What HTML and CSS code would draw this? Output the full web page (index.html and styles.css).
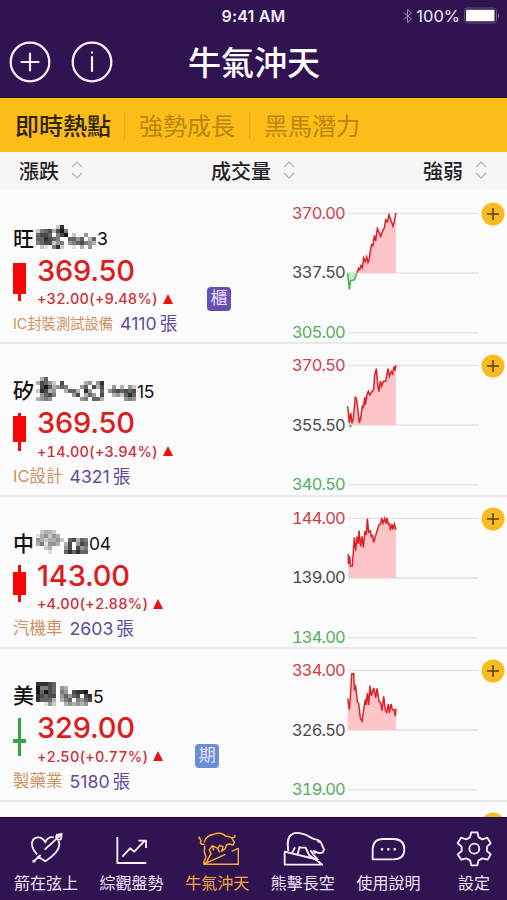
FILE: index.html
```
<!DOCTYPE html>
<html lang="zh-Hant">
<head>
  <meta charset="UTF-8">
  <meta name="viewport" content="width=device-width, initial-scale=1">
  <title>牛氣沖天</title>
  <link rel="stylesheet" href="styles.css">
</head>
<body>
  <div class="app">
    <header class="header">
      <div class="statusbar">
        <span class="time">9:41 AM</span>
        <div class="status-right">
          <svg class="bluetooth" viewBox="0 0 10 16"><path d="M1 4.5 9 11 5 14.5v-13L9 5 1 11.5"/></svg>
          <span class="percent">100%</span>
          <svg class="battery" viewBox="0 0 36 17">
            <rect class="battery-case" x=".5" y="1" width="32" height="15" rx="3"/>
            <rect x="2" y="2.7" width="28.5" height="11.5" rx="1"/>
            <path class="battery-tip" d="M34 6q2 2.5 0 5z"/>
          </svg>
        </div>
      </div>
      <div class="navbar">
        <div class="nav-buttons">
          <svg viewBox="0 0 42 42"><circle cx="21" cy="21" r="19.3"/><path d="M12.5 21h17M21 12.5v17"/></svg>
          <svg viewBox="0 0 42 42"><circle cx="21" cy="21" r="19.3"/><path d="M21 16v14M21 11.3v.4"/></svg>
        </div>
        <h1>牛氣沖天</h1>
      </div>
    </header>

    <nav class="tabs">
      <span class="tab active">即時熱點</span>
      <span class="tab">強勢成長</span>
      <span class="tab">黑馬潛力</span>
    </nav>

    <div class="sortbar">
      <div class="sort">漲跌<svg viewBox="0 0 12 20"><path d="m1 7 5-5 5 5M1 13l5 5 5-5"/></svg></div>
      <div class="sort">成交量<svg viewBox="0 0 12 20"><path d="m1 7 5-5 5 5M1 13l5 5 5-5"/></svg></div>
      <div class="sort">強弱<svg viewBox="0 0 12 20"><path d="m1 7 5-5 5 5M1 13l5 5 5-5"/></svg></div>
    </div>

    <main class="list" id="list"></main>

    <footer class="tabbar">
      <div class="item">
        <svg viewBox="72 54 132 120">
          <path d="M98 154l24-22M104 154v-5h-6M112 136l24 15c20-13 42-32 42-51 0-5-1-9-4-12M161 79c-12-2-21 5-25 15-5-10-13-16-24-15-14 2-19 15-15 28 3 10 8 17 14 23M134 116l50-46M168 72l17-3-2 17M168 83l2-11M172 85l11 1"/>
        </svg>
        <span>箭在弦上</span>
      </div>
      <div class="item">
        <svg viewBox="330 54 132 120">
          <path d="M352 78v78h87M367 137l23-25 13 10 32-34M415 89h23v22"/>
        </svg>
        <span>綜觀盤勢</span>
      </div>
      <div class="item active">
        <svg viewBox="588 54 132 120">
          <path d="M616 94c4-16 16-22 28-24 12-6 28-4 36 6 8-2 14 2 18 5 7 0 10-3 10-9M699 82l7 12-4 8-10-3-9 2-4 11-11 9 4-14-10-4-6 9 6 12M656 112l-16-8-9 12 5 12-8 14-6 14h-8l7-18-5-15 1-19M616 99c-9 3-14-3-10-9 2-4-6-5-6-12M598 82l5-5M640 104l4 14M613 160h105v-48l-20 9M613 160l66-30"/>
        </svg>
        <span>牛氣沖天</span>
      </div>
      <div class="item">
        <svg viewBox="84 54 132 120">
          <path d="M106 120c-3-20-5-42 12-51 10-6 28-2 39 2 12 5 20 13 30 14 6 0 10 0 17 10l9 20-4 10-13 1-12-6M95 122v39h113l-22-17zM118 124l8-15M140 106l-6 24M140 110h18l10 22 22 16M172 118l10 14 14 16M180 118l8 10M199 94l-5-5"/>
        </svg>
        <span>熊擊長空</span>
      </div>
      <div class="item">
        <svg viewBox="342 54 132 120">
          <path d="M362 145v-30q1-31 32-31h31q32 1 32 31t-32 30z"/>
          <path class="dots" d="M390 115h.1M409 115h.1M428 115h.1"/>
        </svg>
        <span>使用說明</span>
      </div>
      <div class="item">
        <svg viewBox="598 54 132 120">
          <path d="M656 64h18l4 15 11 6 15-5 10 17-11 10v13l11 10-9 16-16-4-11 6-4 15h-18l-4-15-11-6-15 4-11-16 12-10v-13l-12-10 10-17 16 5 11-6z"/>
          <circle cx="665" cy="113" r="15"/>
        </svg>
        <span>設定</span>
      </div>
    </footer>
  </div>

  <script>
    // candle: [wick top, body top, body bottom, wick bottom]
    // mask: darkness 0-9 of each 4px cell
    const stocks = [
      {
        name: '旺', code: '3', price: '369.50', change: '+32.00(+9.48%)', sector: 'IC封裝測試設備', volume: '4110',
        badge: '櫃', badgeClass: 'otc', candle: [3, 3, 34, 41], scale: ['370.00', '337.50', '305.00'],
        mask: ['000002800000000', '256737950000000', '677605790200400', '668765006646036', '567724504567543', '021058200103040'],
        up: '30,245 35,232 38,236 42,224 46,231 50,201 55,212 59,198 63,214 67,204 70,180 74,161 78,164 82,133 86,150 91,113 98,128 101,136 108,118 112,110 116,87 121,93 126,72 131,86 138,106 142,91 147,66',
        down: '2,247 4,266 7,296 11,269 22,267 29,247'
      },
      {
        name: '矽', code: '15', price: '369.50', change: '+14.00(+3.94%)', sector: 'IC設計', volume: '4321',
        candle: [1, 4, 30, 39], scale: ['370.50', '355.50', '340.50'],
        mask: ['0360000000000000000000000', '3764207000003404800000000', '0796346500046073700403042', '2873400366308400604676767', '0467500004703640700342686', '3454000000045066300000454'],
        up: '2,190 7,239 11,210 15,241 19,225 25,161 29,171 37,240 42,220 46,187 49,196 53,163 55,186 60,154 64,145 68,156 72,150 80,139 83,96 88,77 92,124 96,146 100,114 104,129 109,115 116,115 123,77 127,101 133,85 137,93 141,70 144,83 147,67',
        down: '8,247 10,251 13,247'
      },
      {
        name: '中', code: '04', price: '143.00', change: '+4.00(+2.88%)', sector: '汽機車', volume: '2603',
        candle: [0, 7, 30, 37], scale: ['144.00', '139.00', '134.00'],
        mask: ['0233200000000', '1342430000000', '4323342067365', '3514430370476', '0023000470745', '0001000686866'],
        up: '4,174 4,204 8,181 10,210 16,210 18,180 22,124 26,165 30,122 34,144 36,104 41,151 45,121 49,154 54,105 58,117 61,68 65,109 70,105 73,122 77,119 80,139 85,122 91,102 96,87 101,82 104,66 108,82 113,67 117,83 120,66 124,85 128,84 130,103 135,85 138,101 142,84 147,101',
        down: ''
      },
      {
        name: '美', code: '5', price: '329.00', change: '+2.50(+0.77%)', sector: '製藥業', volume: '5180',
        badge: '期', badgeClass: 'fut', candle: [1, 22, 26, 39], scale: ['334.00', '326.50', '319.00'],
        mask: ['88876000000000', '95576043000000', '96976054078890', '87677046467078', '86663035605467', '00142003434340'],
        up: '2,151 7,185 11,134 14,78 20,77 22,123 26,115 31,161 35,167 40,211 45,220 50,184 55,154 57,171 61,135 65,171 69,113 73,144 80,120 86,150 90,121 96,160 101,165 105,188 110,145 115,187 119,193 124,168 127,195 132,168 136,185 141,185 145,205 147,182',
        down: ''
      }
    ];

    function mosaic(rows) {
      const cols = rows[0].length;
      let cells = '';
      rows.forEach((row, y) => [...row].forEach((v, x) => {
        if (+v) cells += `<rect x="${x * 4}" y="${y * 4}" width="4" height="4" fill-opacity="${v / 10}"/>`;
      }));
      return `<svg class="mosaic" width="${cols * 4}" height="24">${cells}</svg>`;
    }

    function candle([top, bodyTop, bodyBottom, bottom]) {
      const small = bodyBottom - bodyTop < 6;
      return `<svg class="candle ${small ? 'green' : ''}" viewBox="0 0 13 42">
        <rect x="5" y="${top}" width="3" height="${bottom - top}"/>
        <rect y="${bodyTop}" width="13" height="${bodyBottom - bodyTop}"/>
      </svg>`;
    }

    function chart(s) {
      const lastX = 147;
      const firstX = s.up.split(',')[0];
      return `<svg class="chart" viewBox="0 0 399 458">
        <path class="grid" d="M2 67h392M2 246h392M2 426h392"/>
        <polygon class="up-area" points="${firstX},246 ${s.up} ${lastX},246"/>
        <polyline class="up-line" points="${s.up}"/>
        ${s.down ? `<polygon class="down-area" points="${s.down}"/><polyline class="down-line" points="${s.down}"/>` : ''}
      </svg>`;
    }

    const plus = '<svg class="add" viewBox="0 0 24 24"><circle cx="12" cy="12" r="11.5"/><path d="M6 12h12M12 6v12"/></svg>';

    document.getElementById('list').innerHTML = stocks.map(s => `
      <section class="stock">
        <div class="info">
          <div class="name">${s.name}${mosaic(s.mask)}<span>${s.code}</span></div>
          <div class="quote">
            ${candle(s.candle)}
            <div>
              <div class="price">${s.price}</div>
              <div class="change">${s.change}<i class="triangle"></i>${s.badge ? `<b class="badge ${s.badgeClass}">${s.badge}</b>` : ''}</div>
            </div>
          </div>
          <div class="meta"><span class="sector ${s.sector.length > 6 ? 'long' : ''}">${s.sector}</span><span class="volume">${s.volume}<em>張</em></span></div>
        </div>
        <div class="scale"><span>${s.scale[0]}</span><span>${s.scale[1]}</span><span>${s.scale[2]}</span></div>
        ${chart(s)}
        ${plus}
      </section>`).join('') + `<section class="stock"><div class="info"></div><div class="scale"></div><div class="chart"></div>${plus}</section>`;
  </script>
</body>
</html>
```
FILE: styles.css
```
* {
  margin: 0;
  padding: 0;
  box-sizing: border-box;
}

body {
  background: #fbfbfb;
  font-family: Inter, "Noto Sans CJK TC", sans-serif;
  overflow: hidden;
}

.app {
  height: 900px;
  display: flex;
  flex-direction: column;
}

.header {
  height: 98px;
  flex: none;
  background: #301451;
  border-bottom: 1px solid #220b30;
  color: #fff;
}

.statusbar {
  height: 31px;
  display: grid;
  grid-template-columns: 1fr auto 1fr;
  align-items: center;
  color: #f4eafa;
}

.time {
  grid-column: 2;
  font-size: 16px;
  font-weight: 600;
  letter-spacing: 0.2px;
}

.status-right {
  display: flex;
  align-items: center;
  justify-content: flex-end;
  padding-right: 7px;
}

.bluetooth {
  width: 11px;
  height: 16px;
  margin-right: 3px;
  fill: none;
  stroke: #a18bb9;
}

.percent {
  font-size: 16.5px;
  margin-right: 4px;
}

.battery {
  width: 36px;
  height: 17px;
  fill: #fff;
}

.battery-case {
  fill: none;
  stroke: #65507f;
}

.battery-tip {
  fill: #8a78a0;
}

.navbar {
  height: 62px;
  display: flex;
  align-items: center;
}

.nav-buttons {
  width: 188px;
  display: flex;
  gap: 20px;
  padding-left: 9px;
}

.nav-buttons svg {
  width: 42px;
  height: 42px;
  fill: none;
  stroke: #fbeeff;
  stroke-width: 2.2;
  stroke-linecap: round;
}

h1 {
  font-size: 33px;
  line-height: 40px;
  font-weight: 500;
  padding-top: 2px;
}

.tabs {
  height: 54px;
  flex: none;
  display: flex;
  align-items: center;
  background: #fbbd16;
}

.tab {
  padding: 2px 14px 0;
  font-size: 24px;
  line-height: 25px;
  color: #b98510;
}

.tab + .tab {
  border-left: 1px solid #dfa51b;
}

.tab.active {
  color: #30240c;
  font-weight: 500;
  padding: 2px 13px 0 15px;
}

.sortbar {
  height: 37px;
  flex: none;
  display: flex;
  justify-content: space-between;
  background: #f6f6f6;
  padding: 0 20px 1px 19px;
}

.sort {
  display: flex;
  align-items: center;
  gap: 12px;
  font-size: 20px;
  font-weight: 500;
  color: #222;
}

.sort svg {
  width: 12px;
  height: 20px;
  fill: none;
  stroke: #bdbdbd;
  stroke-width: 1.5;
}

.list {
  flex: 1;
  min-height: 0;
  overflow: hidden;
  padding-top: 2.5px;
}

.stock {
  height: 152.6px;
  display: flex;
  border-bottom: 2px solid #e9e9e9;
}

.info {
  width: 292px;
  padding: 31px 0 0 13px;
}

.name {
  height: 28px;
  display: flex;
  align-items: center;
  font-size: 21px;
  font-weight: 500;
  color: #111;
}

.name span {
  font-size: 17.5px;
  font-weight: 400;
  letter-spacing: -0.3px;
  padding: 4px 0 0 1px;
}

.mosaic {
  flex: none;
  margin-left: 2px;
}

.quote {
  height: 59px;
  display: flex;
  gap: 11px;
  padding-top: 1px;
}

.candle {
  width: 13px;
  height: 42px;
  margin-top: 8px;
  fill: #f90505;
}

.candle.green {
  fill: #36a345;
}

.price {
  height: 35px;
  font-size: 29px;
  line-height: 37px;
  font-weight: 500;
  letter-spacing: -0.2px;
  color: #dc1c20;
}

.change {
  height: 24px;
  display: flex;
  align-items: center;
  font-size: 14.5px;
  font-weight: 500;
  font-variant-numeric: tabular-nums;
  letter-spacing: 0.2px;
  color: #ca303a;
}

.triangle {
  border: 5.5px solid transparent;
  border-top: 0;
  border-bottom: 10px solid #ec1010;
  margin-left: 5px;
}

.badge {
  width: 24px;
  height: 24px;
  margin-left: 34px;
  border-radius: 4px;
  background: #6650b3;
  color: #e6ddff;
  font-size: 17px;
  font-weight: 400;
  line-height: 23px;
  letter-spacing: 0;
  text-align: center;
}

.badge.fut {
  margin-left: 32px;
  background: #6b8fd6;
}

.meta {
  height: 25px;
  display: flex;
  align-items: center;
  gap: 7px;
}

.sector {
  font-size: 16.5px;
  color: #ce915f;
}

.sector.long {
  font-size: 14.3px;
}

.volume {
  font-size: 17.7px;
  color: #604c98;
}

.volume em {
  font-style: normal;
  margin-left: 3px;
}

.scale {
  width: 55px;
  display: flex;
  flex-direction: column;
  gap: 39.5px;
  padding-top: 11px;
  font-size: 16.5px;
  line-height: 20px;
  font-variant-numeric: tabular-nums;
  letter-spacing: -0.85px;
  color: #48484c;
}

.scale span:first-child {
  color: #cf3e49;
}

.scale span:last-child {
  color: #58ac60;
}

.chart {
  width: 133px;
  height: 152.6px;
  flex: none;
  margin-top: -0.8px;
}

.grid {
  fill: none;
  stroke: #e0e2e0;
  stroke-width: 4;
}

.up-area {
  fill: #fdc5c7;
}

.up-line {
  fill: none;
  stroke: #dc2028;
  stroke-width: 4.5;
}

.down-area {
  fill: #c9edcb;
}

.down-line {
  fill: none;
  stroke: #46ad50;
  stroke-width: 4.5;
}

.add {
  width: 24px;
  height: 24px;
  flex: none;
  margin: 10px 0 0 1px;
  fill: #f8bb21;
}

.add path {
  stroke: #54400f;
  stroke-width: 1.5;
}

.tabbar {
  height: 83px;
  flex: none;
  display: flex;
  gap: 21.6px;
  padding: 11px 0 0 14px;
  background: #301451;
  border-top: 1px solid #200a3a;
}

.item {
  width: 64px;
  flex: none;
  display: flex;
  flex-direction: column;
  align-items: center;
  font-size: 16px;
  line-height: 24px;
  color: #f0e3f8;
}

.item svg {
  width: 44px;
  height: 40px;
  margin-bottom: 2px;
  fill: none;
  stroke: #fbeeff;
  stroke-width: 5.5;
  stroke-linejoin: round;
}

.item .dots {
  stroke-width: 8;
  stroke-linecap: round;
}

.item.active {
  color: #f0a63a;
}

.item.active svg {
  stroke: #f5ab2e;
  stroke-width: 4.5;
}
```
